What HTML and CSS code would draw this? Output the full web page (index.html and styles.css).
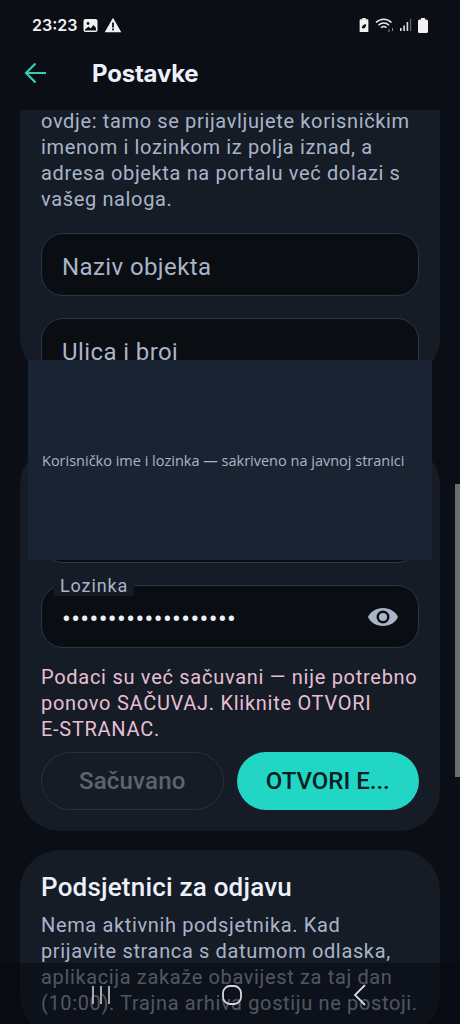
FILE: index.html
```html
<!DOCTYPE html>
<html lang="bs">
<head>
<meta charset="utf-8">
<title>Postavke</title>
<link rel="stylesheet" href="styles.css">
</head>
<body>
<div class="screen">
  <div class="statusbar">
    <div class="status-left">
      <span class="time">23:23</span>
      <svg class="si" width="15" height="15" viewBox="0 0 15 15"><rect x="0.500" y="1" width="14" height="13" rx="2" fill="#f1f1f1"/><circle cx="5" cy="5.500" r="1.400" fill="#0b0e14"/><path d="M2 11.500l3.500-3 2 2 3-3.500 2.500 3v2.500H2z" fill="#0b0e14"/></svg>
      <svg class="si" width="18" height="16" viewBox="0 0 18 16"><path d="M9 .8l8.300 14.400H.7z" fill="#f1f1f1"/><rect x="8.100" y="5.500" width="1.800" height="5" fill="#0b0e14"/><rect x="8.100" y="11.500" width="1.800" height="1.800" fill="#0b0e14"/></svg>
    </div>
    <div class="status-right">
      <svg class="leaf" width="10" height="14" viewBox="0 0 11 16"><path d="M3.500 0h4v1.500h2a1 1 0 0 1 1 1V15a1 1 0 0 1-1 1h-8a1 1 0 0 1-1-1V2.500a1 1 0 0 1 1-1h2z" fill="#f1f1f1"/><path d="M3 11.500c0-3 2-4.500 5-4.500 0 3-1.500 5-4 5z" fill="#0b0e14"/></svg>
      <svg width="20" height="16" viewBox="0 0 20 16" fill="none" stroke="#e8e8e8" stroke-width="1.500"><path d="M1 5.500c4.500-4.500 11-4.500 15.500 0"/><path d="M3.500 8.200c3-3 7.500-3 10.500 0"/><path d="M6 10.800c1.800-1.600 3.800-1.600 5.500 0"/><path d="M14 12v3M17.500 11v3" stroke="#8a8d92" stroke-width="1"/></svg>
      <svg class="signal" width="12" height="14" viewBox="0 0 12 14"><rect x="0" y="10" width="1.600" height="3" fill="#ddd"/><rect x="3.300" y="7.500" width="1.600" height="5.500" fill="#ddd"/><rect x="6.600" y="4" width="1.600" height="9" fill="#ddd"/><rect x="9.900" y="1" width="1.300" height="12" fill="#666"/></svg>
      <svg width="10" height="15" viewBox="0 0 10 15"><path d="M3 0h4v1.500h1.500a1.500 1.500 0 0 1 1.500 1.500v10.500a1.500 1.500 0 0 1-1.500 1.500h-7A1.500 1.500 0 0 1 0 13.500V3a1.500 1.500 0 0 1 1.500-1.500H3z" fill="#f1f1f1"/></svg>
    </div>
  </div>
  <header class="appbar">
    <svg class="back" width="24" height="24" viewBox="0 0 24 24" fill="none" stroke="#2fd0b8" stroke-width="2.200"><path d="M22 12H2.500M11.500 2.500L2 12l9.500 9.500"/></svg>
    <h1 class="title">Postavke</h1>
  </header>
  <main class="scroll">
    <section class="card card-address">
      <p class="body-text">ovdje: tamo se prijavljujete korisničkim imenom i lozinkom iz polja iznad, a adresa objekta na portalu već dolazi s vašeg naloga.</p>
      <div class="field field-first"><span class="field-text">Naziv objekta</span></div>
      <div class="field"><span class="field-text">Ulica i broj</span></div>
    </section>
    <section class="card card-login">
      <div class="field field-user"></div>
      <div class="field field-pass">
        <span class="float-label">Lozinka</span>
        <span class="dots">•••••••••••••••••••</span>
        <svg class="eye" width="34" height="24" viewBox="0 0 34 24"><path d="M17 3C10 3 4 7 2 12c2 5 8 9 15 9s13-4 15-9c-2-5-8-9-15-9z" fill="#a9b4c9"/><circle cx="17" cy="12" r="6.500" fill="#0a0d12"/><circle cx="17" cy="12" r="4" fill="#a9b4c9"/></svg>
      </div>
      <p class="notice">Podaci su već sačuvani — nije potrebno ponovo SAČUVAJ. Kliknite OTVORI E&#8209;STRANAC.</p>
      <div class="actions">
        <button class="btn btn-off">Sačuvano</button>
        <button class="btn btn-on">OTVORI E...</button>
      </div>
    </section>
    <section class="card card-reminders">
      <h2 class="card-title">Podsjetnici za odjavu</h2>
      <p class="body-text">Nema aktivnih podsjetnika. Kad prijavite stranca s datumom odlaska, aplikacija zakaže obavijest za taj dan (10:00). Trajna arhiva gostiju ne postoji.</p>
    </section>
  </main>
  <div class="redaction">Korisničko ime i lozinka — sakriveno na javnoj stranici</div>
  <div class="scrollbar"></div>
  <nav class="navbar">
    <svg width="22" height="24" viewBox="0 0 22 24" stroke="#c9ccd1" stroke-width="1.600" fill="none"><path d="M3 3v18M11 3v18M19 3v18"/></svg>
    <svg width="22" height="22" viewBox="0 0 22 22" stroke="#d5d7db" stroke-width="1.800" fill="none"><rect x="2" y="2" width="18" height="18" rx="7"/></svg>
    <svg width="16" height="26" viewBox="0 0 16 26" stroke="#d5d7db" stroke-width="1.800" fill="none"><path d="M13 3L3 13l10 10"/></svg>
  </nav>
</div>
</body>
</html>
```
FILE: styles.css
```css
* { box-sizing: border-box; }
html, body { margin: 0; padding: 0; }
body { background: #0b0e14; font-family: Roboto, "Noto Sans", sans-serif; }
.screen { position: relative; width: 460px; height: 1024px; overflow: hidden; background: #0b0e14; display: flex; flex-direction: column; }

.statusbar { height: 50px; padding: 0 32px; display: flex; align-items: center; justify-content: space-between; flex: none; }
.status-left { display: flex; align-items: center; gap: 6px; }
.time { font-family: Inter, Roboto, sans-serif; font-size: 16px; font-weight: 600; color: #f1f1f1; }
.si { display: block; }
.status-right { display: flex; align-items: center; gap: 6px; }
.signal { margin-left: -1px; }

.appbar { height: 60px; padding: 0 0 14px 24px; display: flex; align-items: center; gap: 44px; flex: none; }
.back { display: block; }
.title { margin: 0; font-size: 24px; font-weight: 700; color: #eef1fb; font-family: Inter, Roboto, sans-serif; letter-spacing: -0.2px; }

.scroll { flex: 1; overflow: hidden; padding: 0 20px; display: flex; flex-direction: column; }
.card { background: #151c26; border-radius: 40px; padding: 0 21px; flex: none; }
.card-address { margin-top: -40px; padding-top: 38px; height: 308px; overflow: hidden; }
.card-login { margin-top: 67px; height: 386px; padding-top: 55px; }
.card-reminders { margin-top: 19px; padding-top: 21px; padding-bottom: 20px; }

.body-text { margin: 0; font-size: 20px; line-height: 26px; letter-spacing: 0.64px; color: #a9b4c9; }
.field { position: relative; height: 63px; border: 1px solid #2d3644; border-radius: 22px; background: #0a0d12; display: flex; align-items: center; padding: 0 20px; margin-top: 22px; }
.field-first { margin-top: 21px; }
.field-text { font-size: 24px; color: #a9b4c9; letter-spacing: 0.4px; padding-top: 4px; }
.field-user { margin-top: 0; }
.field-pass { justify-content: space-between; padding-right: 18px; }
.float-label { position: absolute; left: 12px; top: -10px; padding: 0 6px; background: #151c26; font-size: 18px; line-height: 20px; letter-spacing: 0.9px; color: #a9b4c9; }
.dots { font-size: 26px; letter-spacing: 0.4px; color: #eef1fb; padding-top: 5px; }
.eye { display: block; }

.notice { margin: 16px 0 0; font-size: 20px; line-height: 26px; letter-spacing: 0.72px; color: #e6bfd3; }
.actions { display: flex; gap: 13px; margin-top: 10px; }
.btn { flex: 1; height: 58px; border: 1px solid transparent; border-radius: 29px; font-family: Roboto, sans-serif; font-size: 24px; font-weight: 500; padding: 0; }
.btn-off { background: transparent; border-color: #2a313c; color: #5d646e; letter-spacing: 0.2px; }
.btn-on { background: #22d6c5; color: #04211f; }

.card-title { margin: 0 0 9px; font-size: 26px; line-height: 32px; font-weight: 500; color: #eef1fb; letter-spacing: 0.2px; }

.redaction { position: absolute; left: 28px; top: 360px; width: 404px; height: 200px; background: #1a2332; color: #aab4c5; display: flex; align-items: center; padding-left: 14px; font-family: "Open Sans", "Noto Sans", sans-serif; font-size: 14.500px; }
.scrollbar { position: absolute; right: 0; top: 484px; width: 5px; height: 293px; background: #6a6d72; }
.navbar { position: absolute; left: 0; right: 0; bottom: 0; height: 61px; background: rgba(8, 10, 14, 0.55); display: flex; align-items: center; justify-content: space-between; padding: 2px 92px 0 90px; }
```
